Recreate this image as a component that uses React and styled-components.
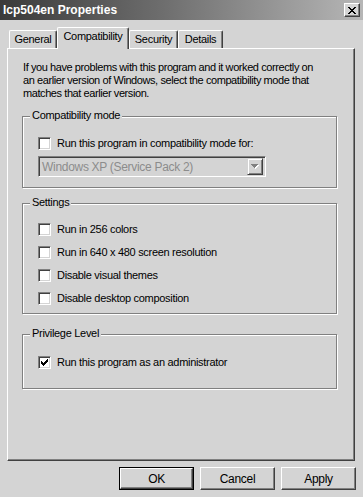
import React from "react";
import styled, { createGlobalStyle } from "styled-components";

const FACE = "#d4d4d4";
const SHADOW = "#808080";
const DARK = "#404040";

const Global = createGlobalStyle`
  html, body { margin: 0; padding: 0; background: ${FACE}; }
  body {
    font-family: "Liberation Sans", Arial, sans-serif;
    font-size: 11px;
    letter-spacing: -0.3px;
    color: #000;
  }
  * { box-sizing: border-box; }
`;

const Window = styled.div`
  width: 363px;
  height: 497px;
  background: ${FACE};
  display: flex;
  flex-direction: column;
  overflow: hidden;
`;

const TitleBar = styled.div`
  height: 20px;
  flex: none;
  display: flex;
  align-items: center;
  justify-content: space-between;
  padding: 0 3px 0 3px;
  background: linear-gradient(to right, #3a3a3a 0%, #6e6e6e 45%, #b6b6b6 100%);
`;

const Title = styled.span`
  color: #fff;
  font-weight: bold;
  font-size: 12px;
  letter-spacing: 0;
`;

const CloseButton = styled.div`
  width: 16px;
  height: 14px;
  background: ${FACE};
  border-top: 1px solid #fff;
  border-left: 1px solid #fff;
  border-right: 1px solid ${DARK};
  border-bottom: 1px solid ${DARK};
  box-shadow: inset -1px -1px 0 ${SHADOW};
  display: flex;
  align-items: center;
  justify-content: center;
`;

const TabRow = styled.div`
  display: flex;
  align-items: flex-end;
  height: 28px;
  padding-left: 9px;
  position: relative;
  z-index: 1;
`;

const Tab = styled.div`
  width: ${(p) => p.$w}px;
  height: ${(p) => (p.$active ? 22 : 18)}px;
  margin-bottom: ${(p) => (p.$active ? -1 : 0)}px;
  background: ${FACE};
  border-top: 1px solid #fff;
  border-left: 1px solid #fff;
  border-right: 1px solid ${DARK};
  border-top-left-radius: 2px;
  border-top-right-radius: 2px;
  box-shadow: inset -1px 0 0 ${SHADOW};
  display: flex;
  justify-content: center;
  padding-top: 2px;
  line-height: 13px;
`;

const Panel = styled.div`
  margin-left: 7px;
  width: 348px;
  height: 413px;
  flex: none;
  border-top: 1px solid #fff;
  border-left: 1px solid #fff;
  border-right: 1px solid ${DARK};
  border-bottom: 1px solid ${DARK};
  box-shadow: inset -1px -1px 0 ${SHADOW};
  padding: 12px 0 0 14px;
  display: flex;
  flex-direction: column;
`;

const Intro = styled.p`
  margin: 0 0 16px 1px;
  line-height: 13px;
  letter-spacing: -0.42px;
`;

const Group = styled.div`
  position: relative;
  width: 315px;
  height: ${(p) => p.$h}px;
  margin-bottom: ${(p) => p.$mb || 0}px;
  border: 1px solid ${SHADOW};
  box-shadow: inset 1px 1px 0 #fff, 1px 1px 0 #fff;
  padding: ${(p) => p.$pt}px 0 0 15px;
  display: flex;
  flex-direction: column;
  gap: ${(p) => p.$gap || 0}px;
`;

const Legend = styled.span`
  position: absolute;
  top: -8px;
  left: 7px;
  padding: 0 2px 0 2px;
  background: ${FACE};
  line-height: 13px;
`;

const CheckRow = styled.label`
  display: flex;
  align-items: center;
  gap: 6px;
  height: 13px;
  line-height: 13px;
`;

const Box = styled.span`
  width: 13px;
  height: 13px;
  flex: none;
  background: #fff;
  border-top: 1px solid ${SHADOW};
  border-left: 1px solid ${SHADOW};
  border-right: 1px solid #fff;
  border-bottom: 1px solid #fff;
  box-shadow: inset 1px 1px 0 ${DARK}, inset -1px -1px 0 ${FACE};
  display: flex;
  align-items: center;
  justify-content: center;
`;

const Select = styled.div`
  margin-top: 6px;
  width: 228px;
  height: 21px;
  background: ${FACE};
  border-top: 1px solid ${SHADOW};
  border-left: 1px solid ${SHADOW};
  border-right: 1px solid #fff;
  border-bottom: 1px solid #fff;
  box-shadow: inset 1px 1px 0 ${DARK}, inset -1px -1px 0 ${FACE};
  display: flex;
  align-items: center;
  justify-content: space-between;
  padding: 2px 2px 2px 3px;
  font-size: 12px;
  color: #8c8c8c;
`;

const SelectArrow = styled.span`
  width: 16px;
  height: 17px;
  flex: none;
  background: ${FACE};
  border-top: 1px solid ${FACE};
  border-left: 1px solid ${FACE};
  border-right: 1px solid ${DARK};
  border-bottom: 1px solid ${DARK};
  box-shadow: inset 1px 1px 0 #fff, inset -1px -1px 0 ${SHADOW};
  display: flex;
  align-items: center;
  justify-content: center;
`;

const ButtonRow = styled.div`
  display: flex;
  justify-content: flex-end;
  gap: 6px;
  width: 349px;
  margin: 6px 0 0 7px;
`;

const Button = styled.div`
  width: 75px;
  height: 23px;
  background: ${FACE};
  border: 1px solid ${(p) => (p.$default ? "#000" : "transparent")};
  display: flex;
  align-items: stretch;
  justify-content: stretch;
`;

const ButtonFace = styled.span`
  flex: 1;
  border-top: 1px solid #fff;
  border-left: 1px solid #fff;
  border-right: 1px solid ${DARK};
  border-bottom: 1px solid ${DARK};
  box-shadow: inset -1px -1px 0 ${SHADOW};
  display: flex;
  align-items: center;
  justify-content: center;
  font-size: 12px;
`;

const PlainButton = styled.div`
  width: 75px;
  height: 23px;
  background: ${FACE};
  border-top: 1px solid #fff;
  border-left: 1px solid #fff;
  border-right: 1px solid ${DARK};
  border-bottom: 1px solid ${DARK};
  box-shadow: inset -1px -1px 0 ${SHADOW};
  display: flex;
  align-items: center;
  justify-content: center;
  font-size: 12px;
`;

const CloseGlyph = () => (
  <svg width="8" height="7" viewBox="0 0 8 7" shapeRendering="crispEdges">
    <path
      d="M0 0h2v1H0zM6 0h2v1H6zM1 1h2v1H1zM5 1h2v1H5zM2 2h4v1H2zM3 3h2v1H3zM2 4h4v1H2zM1 5h2v1H1zM5 5h2v1H5zM0 6h2v1H0zM6 6h2v1H6z"
      fill="#000"
    />
  </svg>
);

const CheckMark = () => (
  <svg width="7" height="7" viewBox="0 0 7 7" shapeRendering="crispEdges">
    <path
      d="M6 0h1v3H6zM5 1h1v3H5zM4 2h1v3H4zM3 3h1v3H3zM2 4h1v3H2zM1 3h1v3H1zM0 2h1v3H0z"
      fill="#000"
    />
  </svg>
);

const DownArrow = () => (
  <svg width="8" height="5" viewBox="0 0 8 5" shapeRendering="crispEdges">
    <path d="M1 1h7v1H1zM2 2h5v1H2zM3 3h3v1H3zM4 4h1v1H4z" fill="#fff" />
    <path d="M0 0h7v1H0zM1 1h5v1H1zM2 2h3v1H2zM3 3h1v1H3z" fill="#808080" />
  </svg>
);

const Check = ({ checked, children }) => (
  <CheckRow>
    <Box>{checked && <CheckMark />}</Box>
    <span>{children}</span>
  </CheckRow>
);

export default function App() {
  return (
    <>
      <Global />
      <Window>
        <TitleBar>
          <Title>lcp504en Properties</Title>
          <CloseButton>
            <CloseGlyph />
          </CloseButton>
        </TitleBar>
        <TabRow>
          <Tab $w={48}>General</Tab>
          <Tab $w={72} $active>
            Compatibility
          </Tab>
          <Tab $w={49}>Security</Tab>
          <Tab $w={45}>Details</Tab>
        </TabRow>
        <Panel>
          <Intro>
            If you have problems with this program and it worked correctly on
            <br />
            an earlier version of Windows, select the compatibility mode that
            <br />
            matches that earlier version.
          </Intro>
          <Group $h={72} $pt={20} $mb={15}>
            <Legend>Compatibility mode</Legend>
            <Check>Run this program in compatibility mode for:</Check>
            <Select>
              <span>Windows XP (Service Pack 2)</span>
              <SelectArrow>
                <DownArrow />
              </SelectArrow>
            </Select>
          </Group>
          <Group $h={111} $pt={19} $gap={10} $mb={20}>
            <Legend>Settings</Legend>
            <Check>Run in 256 colors</Check>
            <Check>Run in 640 x 480 screen resolution</Check>
            <Check>Disable visual themes</Check>
            <Check>Disable desktop composition</Check>
          </Group>
          <Group $h={55} $pt={21}>
            <Legend>Privilege Level</Legend>
            <Check checked>Run this program as an administrator</Check>
          </Group>
        </Panel>
        <ButtonRow>
          <Button $default>
            <ButtonFace>OK</ButtonFace>
          </Button>
          <PlainButton>Cancel</PlainButton>
          <PlainButton>Apply</PlainButton>
        </ButtonRow>
      </Window>
    </>
  );
}
